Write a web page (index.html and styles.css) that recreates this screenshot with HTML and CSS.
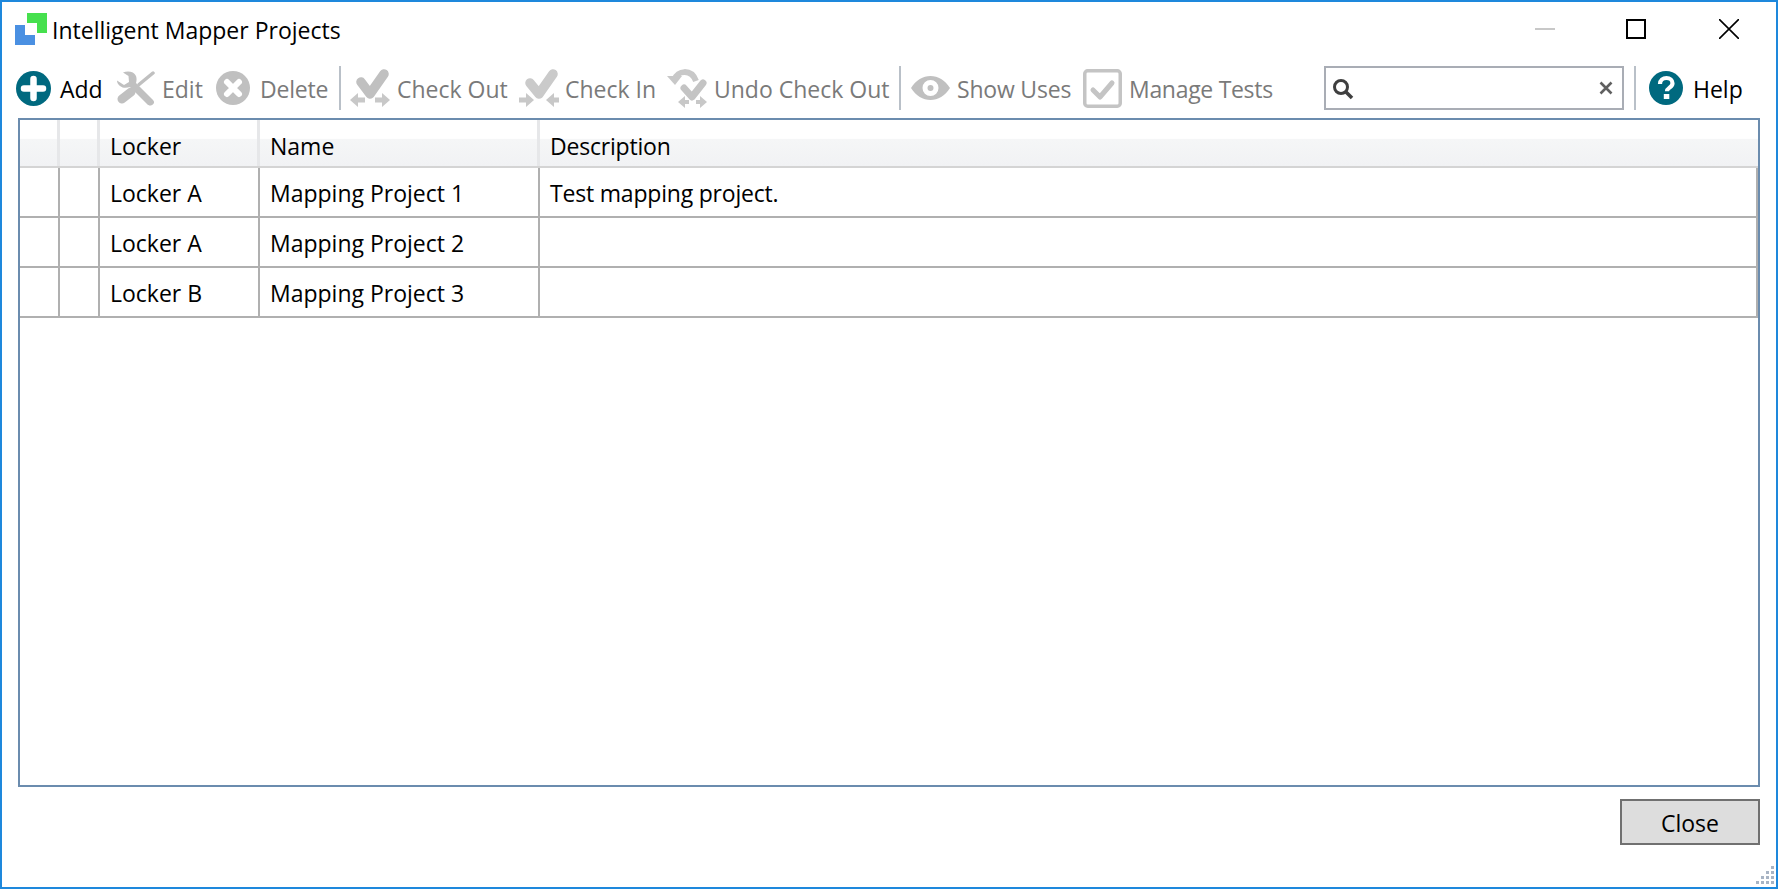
FILE: index.html
```html
<!DOCTYPE html>
<html lang="en">
<head>
<meta charset="utf-8">
<title>Intelligent Mapper Projects</title>
<link rel="stylesheet" href="styles.css">
</head>
<body>
<div class="window">
  <header class="titlebar">
    <svg class="app-icon" width="32" height="32" viewBox="0 0 32 32"><path fill="#4a90e2" d="M0 12h10v10h10v10H0z"/><path fill="#46e04e" d="M12 0h20v20H22V10H12z"/></svg>
    <span class="title">Intelligent Mapper Projects</span>
    <div class="win-buttons">
      <span class="win-btn"><svg width="20" height="20" viewBox="0 0 20 20"><rect y="9" width="20" height="2" fill="#c8c8c8"/></svg></span>
      <span class="win-btn win-max"><svg width="20" height="20" viewBox="0 0 20 20"><rect x="1" y="1" width="18" height="18" fill="none" stroke="#000" stroke-width="2"/></svg></span>
      <span class="win-btn"><svg width="20" height="20" viewBox="0 0 20 20"><path d="M0 0l20 20M20 0L0 20" stroke="#000" stroke-width="1.6"/></svg></span>
    </div>
  </header>
  <div class="toolbar">
    <div class="tool tool-add"><svg width="35" height="35" viewBox="0 0 35 35"><circle cx="17.5" cy="17.5" r="17.5" fill="#00697f"/><path d="M17.5 8v19M8 17.5h19" stroke="#fff" stroke-width="6.5" stroke-linecap="round"/></svg><span>Add</span></div>
    <div class="tool off tool-edit"><svg width="40" height="35" viewBox="0 0 40 35"><path fill="#c0c0c0" d="M1 9.500L8 14l5-3-.5-6L7 1.500C12 -.5 18 .5 20 5c1 3 .5 5 0 7l17 17c2 2 1 4 -1 5-2 1-3.500.5-5-1L14 16c-3 1-7 1.500-10-1-2-1.500-3-3.500-3-5.500z"/><path d="M23 13.500L37 2" stroke="#c0c0c0" stroke-width="3.500" stroke-linecap="round"/><path d="M15 21L6 28" stroke="#c0c0c0" stroke-width="9" stroke-linecap="round"/></svg><span>Edit</span></div>
    <div class="tool off tool-delete"><svg width="34" height="34" viewBox="0 0 34 34"><circle cx="17" cy="17" r="17" fill="#c0c0c0"/><path d="M11 11l12 12M23 11L11 23" stroke="#fff" stroke-width="6" stroke-linecap="round"/></svg><span>Delete</span></div>
    <div class="sep sep-a"></div>
    <div class="tool off tool-out"><svg width="40" height="40" viewBox="0 0 40 40"><path d="M11 14l9 12L34 6" fill="none" stroke="#c0c0c0" stroke-width="9.500" stroke-linecap="round" stroke-linejoin="round"/><path fill="#c8c8c8" d="M0 32l8-7v4.500h7v5H8V39zM40 32l-8-7v4.500h-7v5h7V39z"/></svg><span>Check Out</span></div>
    <div class="tool off tool-in"><svg width="40" height="40" viewBox="0 0 40 40"><path d="M11 15l9 11L34 6" fill="none" stroke="#cacaca" stroke-width="9.500" stroke-linecap="round" stroke-linejoin="round"/><path fill="#c8c8c8" d="M15 32l-8-7v4.500H0v5h7V39zM27 32l8-7v4.500h5v5h-5V39z"/></svg><span>Check In</span></div>
    <div class="tool off tool-undo"><svg width="40" height="40" viewBox="0 0 40 40"><path d="M17 20l8 9 11-14" fill="none" stroke="#c4c4c4" stroke-width="7" stroke-linecap="round" stroke-linejoin="round"/><path d="M8 11C10 3 24 0 29 13" fill="none" stroke="#c8c8c8" stroke-width="6"/><path fill="#c8c8c8" d="M0 8h15l-7 9z"/><path fill="#c8c8c8" d="M11 34l7-6v4h4v4h-4v4zM40 34l-7-6v4h-4v4h4v4z"/></svg><span>Undo Check Out</span></div>
    <div class="sep sep-b"></div>
    <div class="tool off tool-uses"><svg width="39" height="24" viewBox="0 0 39 24"><path fill="#c0c0c0" fill-rule="evenodd" d="M0 12C5 4 12 0 19.500 0S34 4 39 12c-5 8-12 12-19.500 12S5 20 0 12zM19.500 4a8 8 0 1 0 0 16 8 8 0 0 0 0-16zm0 5a3 3 0 1 1 0 6 3 3 0 0 1 0-6z"/></svg><span>Show Uses</span></div>
    <div class="tool off tool-tests"><svg width="39" height="39" viewBox="0 0 39 39"><rect x="1.750" y="1.750" width="35.500" height="35.500" rx="3" fill="none" stroke="#c4c4c4" stroke-width="3.500"/><path d="M10 21l7 7L29 14" fill="none" stroke="#c4c4c4" stroke-width="5" stroke-linecap="round" stroke-linejoin="round"/></svg><span>Manage Tests</span></div>
    <div class="search">
      <svg class="search-icon" width="22" height="22" viewBox="0 0 22 22"><circle cx="9" cy="9" r="6.500" fill="none" stroke="#3f3f3f" stroke-width="3"/><path d="M14 14l6 6" stroke="#3f3f3f" stroke-width="3.500"/></svg>
      <svg class="clear" width="14" height="14" viewBox="0 0 14 14"><path d="M1.500 1.500l11 11M12.500 1.500l-11 11" stroke="#606060" stroke-width="2.600"/></svg>
    </div>
    <div class="sep sep-c"></div>
    <div class="tool tool-help"><svg width="34" height="34" viewBox="0 0 34 34"><circle cx="17" cy="17" r="17" fill="#00697f"/><path d="M11 13c0-4 3-6 6.500-6s6 2.200 6 5.200c0 4.500-5.500 4.300-5.500 8" fill="none" stroke="#fff" stroke-width="4.200"/><rect x="14.800" y="23" width="5.500" height="5" fill="#fff"/></svg><span>Help</span></div>
  </div>
  <div class="grid">
    <div class="row head">
      <div class="cell"></div><div class="cell"></div><div class="cell">Locker</div><div class="cell">Name</div><div class="cell desc">Description</div>
    </div>
    <div class="row">
      <div class="cell"></div><div class="cell"></div><div class="cell">Locker A</div><div class="cell">Mapping Project 1</div><div class="cell desc">Test mapping project.</div>
    </div>
    <div class="row">
      <div class="cell"></div><div class="cell"></div><div class="cell">Locker A</div><div class="cell">Mapping Project 2</div><div class="cell desc"></div>
    </div>
    <div class="row">
      <div class="cell"></div><div class="cell"></div><div class="cell">Locker B</div><div class="cell">Mapping Project 3</div><div class="cell desc"></div>
    </div>
  </div>
  <footer class="footer">
    <button class="close-btn" type="button">Close</button>
  </footer>
  <svg class="grip" width="21" height="21" viewBox="0 0 21 21"><path fill="#a8b4c4" d="M17 1h3v3h-3zM17 6h3v3h-3zM12 6h3v3h-3zM17 11h3v3h-3zM12 11h3v3h-3zM7 11h3v3H7zM17 16h3v3h-3zM12 16h3v3h-3zM7 16h3v3H7zM2 16h3v3H2z"/></svg>
</div>
</body>
</html>
```
FILE: styles.css
```css
* { box-sizing: border-box; }
html, body { margin: 0; height: 100%; }
body { font-family: "Open Sans", "Noto Sans", sans-serif; font-size: 23px; color: #000; background: #fff; }
.window { position: relative; width: 1778px; height: 889px; border: 2px solid #1e88dc; display: flex; flex-direction: column; background: #fff; overflow: hidden; }
.titlebar { height: 56px; flex: none; display: flex; align-items: center; padding: 0 0 0 13px; margin-bottom: 8px; }
.app-icon { margin-top: -2px; margin-right: 5px; }
.win-buttons { margin-left: auto; display: flex; padding-right: 37px; margin-top: -2px; }
.win-btn { display: flex; width: 20px; height: 20px; margin-left: 73px; }
.win-max { margin-left: 71px; }
.toolbar { height: 44px; flex: none; display: flex; align-items: center; padding-left: 14px; }
.tool { display: flex; align-items: center; gap: 9px; flex: none; white-space: nowrap; }
.tool span { padding-top: 2px; }
.tool.off { color: #7a7a7a; }
.tool-add { width: 100px; }
.tool-edit { width: 100px; gap: 6px; }
.tool-delete { width: 123px; gap: 10px; letter-spacing: -0.2px; }
.sep { width: 2px; height: 44px; background: #b9c0c8; flex: none; }
.sep-a { margin-right: 9px; }
.tool-out { width: 169px; gap: 7px; }
.tool-in { width: 148px; gap: 6px; }
.tool-undo { width: 232px; gap: 7px; }
.sep-b { margin-right: 10px; }
.tool-uses { width: 172px; gap: 7px; letter-spacing: -0.2px; }
.tool-tests { width: 241px; gap: 7px; letter-spacing: -0.3px; }
.search { width: 300px; height: 44px; border: 2px solid #a9adb5; display: flex; align-items: center; justify-content: space-between; padding: 0 9px 0 6px; flex: none; }
.search-icon { margin-top: 2px; }
.sep-c { margin-left: 10px; margin-right: 13px; }
.tool-help { gap: 10px; }
.grid { flex: none; height: 669px; margin: 8px 0 0 16px; width: 1742px; border: 2px solid #6b8cae; }
.row { display: grid; grid-template-columns: 40px 40px 160px 280px 1fr; height: 50px; border-bottom: 2px solid #b0b0b0; }
.cell { padding: 2px 0 0 10px; display: flex; align-items: center; border-right: 2px solid #b0b0b0; white-space: nowrap; }
.cell:first-child { padding: 0; }
.desc { letter-spacing: -0.2px; }
.head { height: 48px; border-bottom: 2px solid #d4d4d4; background: linear-gradient(#fff 0, #fff 40%, #f5f6f7 42%, #f1f2f4 100%); }
.head .cell { border-right: 3px solid #e6e7e9; padding-top: 6px; }
.head .cell:last-child { border-right: 0; }
.footer { flex: 1; display: flex; justify-content: flex-end; align-items: flex-start; padding: 12px 16px 0 0; }
.close-btn { width: 140px; height: 46px; border: 2px solid #707070; background: #dddddd; font: inherit; padding: 2px 0 0; color: #000; }
.grip { position: absolute; right: 1px; bottom: 1px; }
```
